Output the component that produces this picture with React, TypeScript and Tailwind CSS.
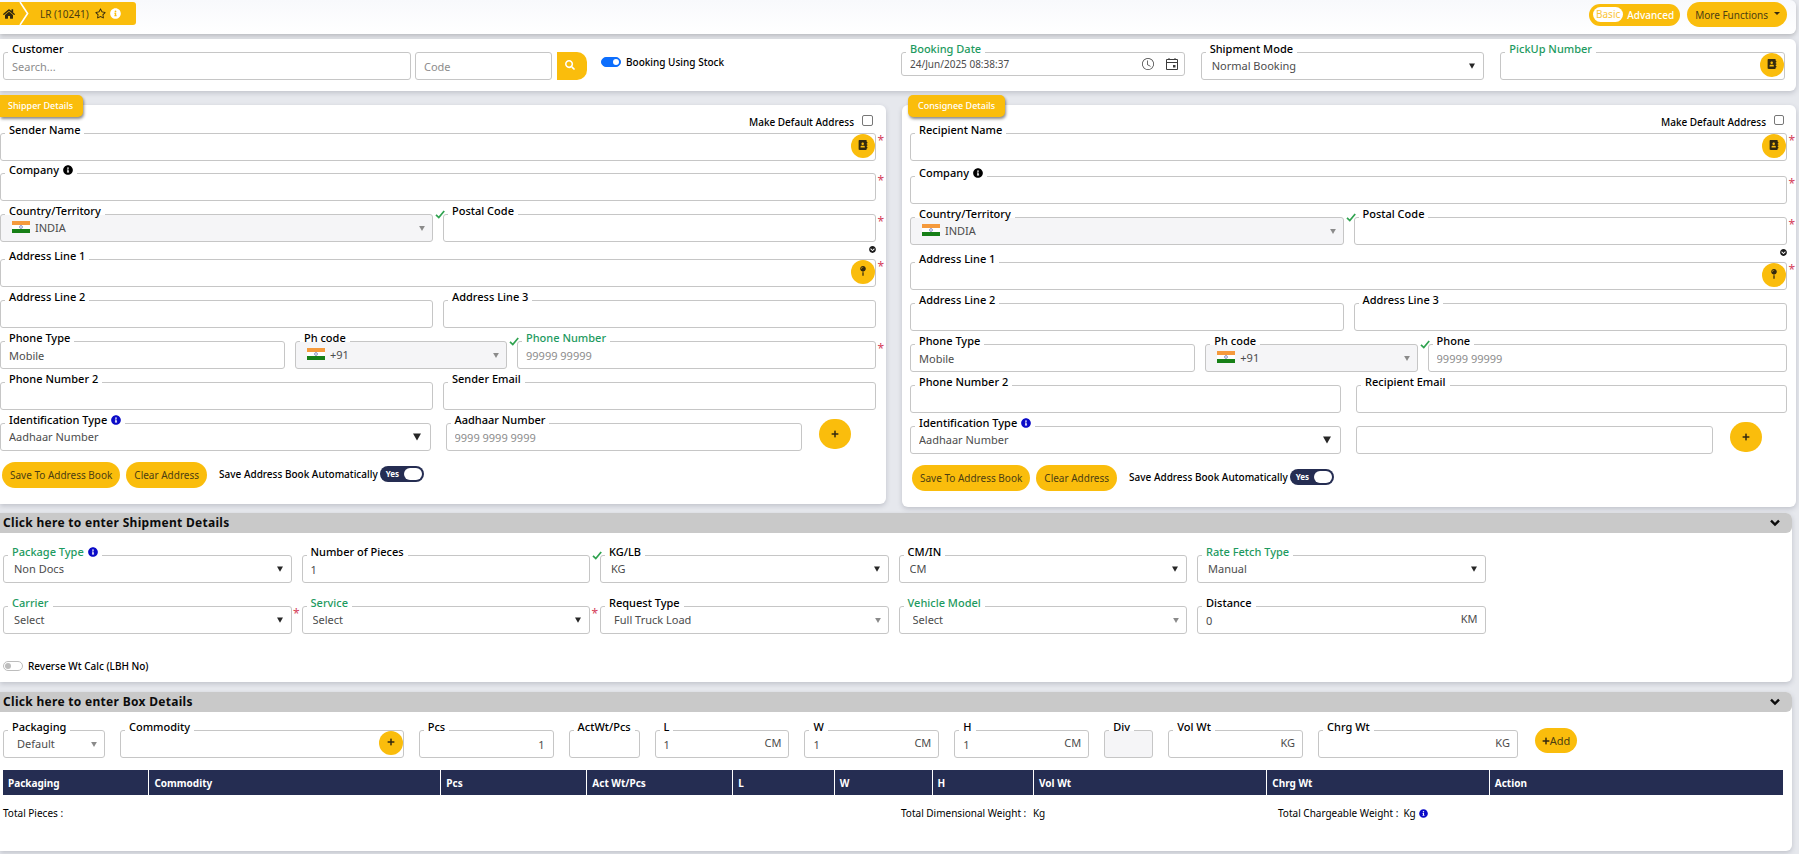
import { useId, type ReactNode } from "react";
import {
  FaAddressBook,
  FaChevronCircleDown,
  FaHome,
  FaInfoCircle,
  FaMapPin,
  FaPlus,
  FaRegStar,
  FaSearch,
} from "react-icons/fa";
import { BsClock } from "react-icons/bs";

type FieldProps = {
  label?: string;
  name?: string;
  green?: boolean;
  info?: "black" | "blue";
  value?: string;
  placeholder?: string;
  select?: boolean;
  light?: boolean;
  big?: boolean;
  disabled?: boolean;
  flag?: boolean;
  check?: boolean;
  star?: boolean;
  unit?: string;
  action?: ReactNode;
  right?: boolean;
  short?: boolean;
};

function Flag() {
  return (
    <svg viewBox="0 0 18 12" className="pointer-events-none absolute left-3 top-[7px] h-3 w-[18px]">
      <rect width="18" height="12" fill="#fff" />
      <rect width="18" height="4" fill="#f59a3c" />
      <rect y="8" width="18" height="4" fill="#178017" />
      <circle cx="9" cy="6" r="1.4" fill="none" stroke="#5560a8" strokeWidth=".7" />
    </svg>
  );
}

function Check() {
  return (
    <svg viewBox="0 0 10 9" className="absolute -left-2 -top-1 h-[9px] w-2.5" fill="none" stroke="#2fa24f" strokeWidth="1.7">
      <path d="M1 4.8 3.8 7.6 9.2 1" />
    </svg>
  );
}

function Field(p: FieldProps) {
  const id = useId();
  const box = [
    "block w-full rounded-[3px] border border-[#c6c6c6] leading-4 text-[#4c4c4c] outline-none placeholder:text-[#8d8d8d]",
    p.short ? "h-6 text-[10px]" : "h-7 text-[11px]",
    p.disabled ? "bg-[#f5f5f7] opacity-100" : "bg-white",
    p.flag ? "pl-[34px]" : p.light ? "pl-[13px]" : p.select && !p.big ? "pl-2.5" : "pl-2",
    p.unit ? "pr-8" : "pr-2",
    p.right ? "text-right" : "",
  ].join(" ");
  return (
    <div className="relative min-w-0">
      {p.select ? (
        <select id={id} aria-label={p.label ? undefined : p.name} disabled={p.disabled} className={box + " appearance-none"}>
          <option>{p.value}</option>
        </select>
      ) : (
        <input
          id={id}
          type="text"
          aria-label={p.label ? undefined : p.name}
          defaultValue={p.value}
          placeholder={p.placeholder}
          disabled={p.disabled}
          className={box}
        />
      )}
      {p.label && (
        <label
          htmlFor={id}
          className={
            "absolute -top-[11px] left-[5px] flex items-center gap-1 whitespace-nowrap bg-[linear-gradient(white_12px,transparent_12px)] px-1 text-[11px] font-medium leading-4 " +
            (p.green ? "text-[#1d9a60]" : "text-black")
          }
        >
          {p.label}
          {p.info && <FaInfoCircle className={p.info === "blue" ? "size-2.5 text-[#0b0bc8]" : "size-2.5 text-black"} />}
        </label>
      )}
      {p.flag && <Flag />}
      {p.check && <Check />}
      {p.select && (
        <svg
          viewBox="0 0 8 7"
          className={
            "pointer-events-none absolute " +
            (p.light ? "right-2 top-3 h-[5px] w-1.5" : p.big ? "right-2.5 top-2.5 h-2 w-2" : "right-[9px] top-[11px] h-1.5 w-1.5")
          }
        >
          <path d="M0 0h8L4 7z" fill={p.light ? "#8a8a8a" : "#262626"} />
        </svg>
      )}
      {p.star && <span className="absolute -right-2 top-0 text-[12px] leading-4 text-[#d5405a]">*</span>}
      {p.unit && (
        <span className="pointer-events-none absolute right-2 top-1 text-[11px] leading-[18px] text-[#4c4c4c]">{p.unit}</span>
      )}
      {p.action}
    </div>
  );
}

function RoundAction({ title, children }: { title: string; children: ReactNode }) {
  return (
    <button
      aria-label={title}
      className="absolute right-px top-px flex size-6 items-center justify-center rounded-full bg-[#fabd0c] pb-0.5 text-[#33290f]"
    >
      {children}
    </button>
  );
}

function YellowButton({ children }: { children: ReactNode }) {
  return (
    <button className="flex h-[26px] items-center whitespace-nowrap rounded-full bg-[#fabd0c] px-2 text-[10px] leading-4 text-[#4c3d12]">
      {children}
    </button>
  );
}

function Party({ consignee }: { consignee?: boolean }) {
  const defaultId = useId();
  const autoId = useId();
  return (
    <section
      aria-label={consignee ? "Consignee" : "Shipper"}
      className={
        "relative bg-white pb-4 shadow-[0_2px_5px_rgba(60,64,80,0.22)] " +
        (consignee ? "rounded-md pl-2 pr-[9px]" : "rounded-r-md pr-2.5")
      }
    >
      <h2
        className={
          "absolute -top-2.5 flex h-[22px] items-center bg-[#fabd0c] text-[9px] font-medium leading-4 text-white shadow-[1px_2px_3px_rgba(0,0,0,0.45)] " +
          (consignee ? "left-1.5 rounded-[5px] px-2.5" : "left-0 rounded-r-[5px] pl-2 pr-2.5")
        }
      >
        {consignee ? "Consignee Details" : "Shipper Details"}
      </h2>
      <div className="flex h-7 items-start justify-end pr-[3px] pt-[9px]">
        <label htmlFor={defaultId} className="text-[10px] font-medium leading-4 text-black">
          Make Default Address
        </label>
        <input
          id={defaultId}
          type="checkbox"
          className={
            "ml-2 mt-px appearance-none rounded-[2px] border border-[#777] bg-white " + (consignee ? "size-2.5" : "size-[11px]")
          }
        />
      </div>
      <div className={consignee ? "mb-[15px]" : "mb-3"}>
        <Field
          label={consignee ? "Recipient Name" : "Sender Name"}
          star
          action={
            <RoundAction title="Open address book">
              <FaAddressBook className="size-2.5" />
            </RoundAction>
          }
        />
      </div>
      <div className="flex flex-col gap-[13px]">
        <Field label="Company" info="black" star />
        <div className="mb-1 grid grid-cols-2 gap-2.5">
          <Field label="Country/Territory" select light disabled flag value="INDIA" />
          <Field
            label="Postal Code"
            check
            star
            action={
              <button aria-label="Show serviceability" className="absolute -bottom-[11px] right-0 text-[#1c1c1c]">
                <FaChevronCircleDown className="size-[7px]" />
              </button>
            }
          />
        </div>
        <Field
          label="Address Line 1"
          star
          action={
            <RoundAction title="Pick on map">
              <FaMapPin className="size-2.5" />
            </RoundAction>
          }
        />
        <div className="grid grid-cols-2 gap-2.5">
          <Field label="Address Line 2" />
          <Field label="Address Line 3" />
        </div>
        <div className="grid grid-cols-[285fr_212fr_359fr] gap-2.5">
          <Field label="Phone Type" value="Mobile" />
          <Field label="Ph code" select light disabled flag value="+91" />
          <Field
            label={consignee ? "Phone" : "Phone Number"}
            green={!consignee}
            star={!consignee}
            check
            placeholder="99999 99999"
          />
        </div>
        <div className={consignee ? "grid grid-cols-2 gap-[15px]" : "grid grid-cols-2 gap-2.5"}>
          <Field label="Phone Number 2" />
          <Field label={consignee ? "Recipient Email" : "Sender Email"} />
        </div>
        <div className="grid grid-cols-2 gap-[15px]">
          <Field label="Identification Type" info="blue" select big value="Aadhaar Number" />
          <div className="flex items-start">
            <div className="min-w-0 flex-1">
              {consignee ? (
                <Field name="Identification number" />
              ) : (
                <Field label="Aadhaar Number" placeholder="9999 9999 9999" />
              )}
            </div>
            <button
              aria-label="Add identification"
              className="-mt-1 ml-[17px] mr-[25px] flex h-[30px] w-8 items-center justify-center rounded-full bg-[#fabd0c] text-[#33290f]"
            >
              <FaPlus className="size-2" />
            </button>
          </div>
        </div>
        <div className="-mt-0.5 flex items-center gap-1.5 pl-0.5">
          <YellowButton>Save To Address Book</YellowButton>
          <YellowButton>Clear Address</YellowButton>
          <div className="ml-1.5 flex items-center gap-0.5 pb-0.5">
            <label htmlFor={autoId} className="text-[10px] font-medium leading-4 text-black">
              Save Address Book Automatically
            </label>
            <div className="relative h-4 w-11 rounded-full bg-[#252d52]">
              <input id={autoId} type="checkbox" role="switch" defaultChecked className="absolute inset-0 appearance-none" />
              <span className="pointer-events-none absolute left-1.5 top-0 text-[8px] font-bold leading-4 text-white">Yes</span>
              <span className="pointer-events-none absolute right-0.5 top-0.5 h-3 w-[18px] rounded-full bg-white" />
            </div>
          </div>
        </div>
      </div>
    </section>
  );
}

function SectionBar({ title }: { title: string }) {
  return (
    <button className="flex h-5 w-full items-center justify-between rounded-r-md bg-[#c9c9c9] pl-[3px] pr-3 text-[12px] font-bold leading-4 tracking-wide text-[#0c0c0c]">
      {title}
      <svg viewBox="0 0 10 8" className="h-2 w-2.5" fill="none" stroke="currentColor" strokeWidth="2.4">
        <path d="M1 1.6 5 5.6 9 1.6" />
      </svg>
    </button>
  );
}

function Switch({ label, on }: { label: string; on?: boolean }) {
  const id = useId();
  return (
    <div className="flex items-center gap-[5px]">
      <span className="relative flex h-2.5 w-5">
        <input
          id={id}
          type="checkbox"
          role="switch"
          defaultChecked={on}
          className={"h-2.5 w-5 appearance-none rounded-full border " + (on ? "border-[#0d6efd] bg-[#0d6efd]" : "border-[#bdbdbd] bg-white")}
        />
        <span
          className={
            "pointer-events-none absolute top-0.5 size-1.5 rounded-full " + (on ? "right-0.5 bg-white" : "left-0.5 bg-[#bdbdbd]")
          }
        />
      </span>
      <label htmlFor={id} className="whitespace-nowrap text-[10px] font-medium leading-4 text-black">
        {label}
      </label>
    </div>
  );
}

const columns = [
  ["Packaging", "w-[8.2%]"],
  ["Commodity", "w-[16.4%]"],
  ["Pcs", "w-[8.2%]"],
  ["Act Wt/Pcs", "w-[8.2%]"],
  ["L", "w-[5.7%]"],
  ["W", "w-[5.5%]"],
  ["H", "w-[5.7%]"],
  ["Vol Wt", "w-[13.1%]"],
  ["Chrg Wt", "w-[12.5%]"],
  ["Action", "w-[16.5%]"],
];

export default function App() {
  return (
    <div className="min-h-screen bg-[#e6e8ed] pb-0.5 font-['Noto_Sans',sans-serif]">
      <header className="mr-[3px] flex h-[34px] items-start justify-between rounded-r-md bg-gradient-to-b from-[#f8f9fc] to-white pr-[9px] pt-0.5 shadow-[0_2px_4px_rgba(0,0,0,0.2)]">
        <nav className="flex h-[23px] items-stretch overflow-hidden rounded-r-[3px] bg-[#fabd0c]">
          <a href="#home" aria-label="Home" className="flex items-center pl-[3px] text-[#33290f]">
            <FaHome className="size-3" />
          </a>
          <svg viewBox="0 0 10 23" className="ml-1 h-[23px] w-2.5" fill="none" stroke="#fff" strokeWidth="1.6">
            <path d="M1 0 8.6 11.5 1 23" />
          </svg>
          <div className="flex items-center gap-1.5 pl-[11px] pr-[15px]">
            <span className="text-[10px] leading-4 text-[#4c3d12]">LR (10241)</span>
            <FaRegStar className="size-[11px] text-[#33290f]" />
            <FaInfoCircle className="-ml-0.5 size-[11px] text-white" />
          </div>
        </nav>
        <div className="flex items-center gap-[7px]">
          <div className="flex h-[22px] items-center gap-1 rounded-full bg-[#fabd0c] pl-1 pr-1.5 text-[10px] leading-4">
            <button className="h-[15px] rounded-full bg-white px-[3px] leading-[15px] text-[#fac53a]">Basic</button>
            <button className="font-medium text-white">Advanced</button>
          </div>
          <button className="flex h-[25px] items-center gap-1.5 rounded-full bg-[#fabd0c] pl-2 pr-[7px] text-[10px] leading-4 text-[#4c3d12]">
            More Functions
            <svg viewBox="0 0 6 3" className="mb-0.5 h-[3px] w-1.5">
              <path d="M0 0h6L3 3z" fill="#33290f" />
            </svg>
          </button>
        </div>
      </header>

      <section
        aria-label="Booking"
        className="mr-[3px] mt-[5px] grid grid-cols-[883fr_284fr_284fr_285fr] items-start gap-x-4 rounded-r-md bg-white pb-[11px] pl-[3px] pr-[11px] pt-[13px] shadow-[0_2px_5px_rgba(60,64,80,0.22)]"
      >
        <div className="flex">
          <div className="w-[408px]">
            <Field label="Customer" placeholder="Search..." />
          </div>
          <div className="ml-1 w-[137px]">
            <Field name="Customer code" placeholder="Code" />
          </div>
          <button
            aria-label="Search customer"
            className="ml-[5px] flex h-7 w-[30px] items-center justify-center rounded-r-[10px] bg-[#fabd0c] pb-0.5 pr-1 text-white"
          >
            <FaSearch className="size-2.5" />
          </button>
          <div className="ml-3.5 mt-[2px]">
            <Switch label="Booking Using Stock" on />
          </div>
        </div>
        <Field
          label="Booking Date"
          green
          short
          value="24/Jun/2025 08:38:37"
          action={
            <div className="absolute right-[7px] top-1.5 flex gap-3 text-[#3c3c3c]">
              <button aria-label="Choose time">
                <BsClock className="size-3" />
              </button>
              <button aria-label="Choose date">
                <svg viewBox="0 0 12 12" className="size-3" fill="none" stroke="currentColor">
                  <path d="M.5 1.5h11v10H.5zM.5 4.5h11M3 0v2M9 0v2" />
                  <path d="M7 7h2.5v2.5H7z" fill="currentColor" stroke="none" />
                </svg>
              </button>
            </div>
          }
        />
        <Field label="Shipment Mode" select value="Normal Booking" />
        <Field
          label="PickUp Number"
          green
          action={
            <RoundAction title="Find pickup">
              <FaAddressBook className="size-2.5" />
            </RoundAction>
          }
        />
      </section>

      <div className="mr-[3px] mt-3.5 grid grid-cols-[886fr_894fr] items-start gap-4">
        <Party />
        <Party consignee />
      </div>

      <section className="mr-[7px] mt-1.5 rounded-r-md bg-white pb-2 shadow-[0_2px_5px_rgba(60,64,80,0.22)]">
        <SectionBar title="Click here to enter Shipment Details" />
        <div className="mr-[17.1%] grid grid-cols-5 gap-x-2.5 gap-y-[23px] pl-[3px] pt-[22px]">
          <Field label="Package Type" green info="blue" select value="Non Docs" />
          <Field label="Number of Pieces" value="1" />
          <Field label="KG/LB" check select value="KG" />
          <Field label="CM/IN" select value="CM" />
          <Field label="Rate Fetch Type" green select value="Manual" />
          <Field label="Carrier" green star select value="Select" />
          <Field label="Service" green star select value="Select" />
          <Field label="Request Type" select light value="Full Truck Load" />
          <Field label="Vehicle Model" green select light value="Select" />
          <Field label="Distance" value="0" unit="KM" />
        </div>
        <div className="mt-6 pl-[3px]">
          <Switch label="Reverse Wt Calc (LBH No)" />
        </div>
      </section>

      <section className="mr-[7px] mt-2.5 rounded-r-md bg-white pb-[30px] shadow-[0_2px_5px_rgba(60,64,80,0.22)]">
        <SectionBar title="Click here to enter Box Details" />
        <div className="mr-[12%] flex items-start pl-[3px] pt-[18px]">
          <div className="grid flex-1 grid-cols-[102fr_284fr_135fr_71fr_135fr_135fr_135fr_49fr_135fr_200fr] gap-x-[15px]">
            <Field label="Packaging" select light value="Default" />
            <Field
              label="Commodity"
              action={
                <RoundAction title="Add commodity">
                  <FaPlus className="size-2" />
                </RoundAction>
              }
            />
            <Field label="Pcs" right value="1" />
            <Field label="ActWt/Pcs" />
            <Field label="L" value="1" unit="CM" />
            <Field label="W" value="1" unit="CM" />
            <Field label="H" value="1" unit="CM" />
            <Field label="Div" disabled />
            <Field label="Vol Wt" unit="KG" />
            <Field label="Chrg Wt" unit="KG" />
          </div>
          <button className="-mt-0.5 ml-[17px] flex h-[25px] w-[42px] items-center justify-center rounded-full bg-[#fabd0c] text-[11px] leading-4 text-[#4c3d12]">
            <FaPlus className="size-2 text-[#33290f]" />
            Add
          </button>
        </div>
        <div className="ml-[3px] mr-[9px] mt-3">
          <table className="w-full table-fixed border-collapse bg-[#252d52] text-[10px] leading-4 text-white">
            <thead>
              <tr>
                {columns.map(([name, width]) => (
                  <th key={name} className={"h-[25px] border-l border-white px-[5px] text-left font-bold first:border-l-0 " + width}>
                    {name}
                  </th>
                ))}
              </tr>
            </thead>
          </table>
        </div>
        <div className="grid grid-cols-[898fr_377fr_514fr] pl-[3px] pt-2.5 text-[10px] leading-4 text-black">
          <span>Total Pieces :</span>
          <span>
            Total Dimensional Weight : <span className="ml-1">Kg</span>
          </span>
          <span className="flex items-center gap-[3px]">
            Total Chargeable Weight : <span className="ml-0.5">Kg</span>
            <FaInfoCircle className="size-[9px] text-[#0b0bc8]" />
          </span>
        </div>
      </section>
    </div>
  );
}
